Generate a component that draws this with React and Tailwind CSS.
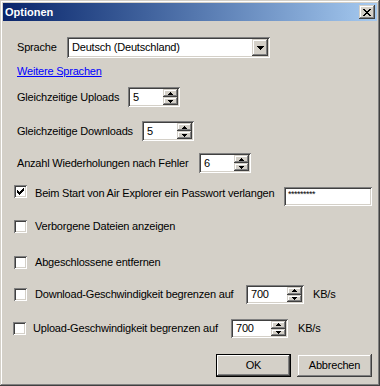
import React from "react";

const SUNKEN =
  "shadow-[inset_1px_1px_#808080,inset_-1px_-1px_#ffffff,inset_2px_2px_#404040,inset_-2px_-2px_#d4d0c8]";
const RAISED =
  "shadow-[inset_-1px_-1px_#404040,inset_1px_1px_#ffffff,inset_-2px_-2px_#808080,inset_2px_2px_#d4d0c8]";
const RAISED_SOFT =
  "shadow-[inset_-1px_-1px_#404040,inset_1px_1px_#d4d0c8,inset_-2px_-2px_#808080,inset_2px_2px_#ffffff]";

function CloseX() {
  const rows = ["11000011", "01100110", "00111100", "00011000", "00111100", "01100110", "11000011"];
  return (
    <svg width="8" height="7" viewBox="0 0 8 7" shapeRendering="crispEdges">
      {rows.map((r, y) =>
        r.split("").map((c, x) => (c === "1" ? <rect key={x + "-" + y} x={x} y={y} width="1" height="1" fill="#000" /> : null))
      )}
    </svg>
  );
}

function Tick() {
  const cols = [2, 3, 4, 3, 2, 1, 0];
  return (
    <svg width="7" height="7" viewBox="0 0 7 7" shapeRendering="crispEdges">
      {cols.map((y, x) => (
        <rect key={x} x={x} y={y} width="1" height="3" fill="#000" />
      ))}
    </svg>
  );
}

function Check({ checked }) {
  return (
    <div className={`flex h-[13px] w-[13px] shrink-0 items-center justify-center bg-white ${SUNKEN}`}>
      {checked ? <Tick /> : null}
    </div>
  );
}

function Arrow({ up, w = 5 }) {
  const h = Math.ceil(w / 2);
  const pts = up ? `0,${h} ${w},${h} ${w / 2},0` : `0,0 ${w},0 ${w / 2},${h}`;
  return (
    <svg width={w} height={h} viewBox={`0 0 ${w} ${h}`} shapeRendering="crispEdges">
      <polygon points={pts} fill="#000" />
    </svg>
  );
}

function Spin({ value, w = "w-[52px]", h = "h-[20px]" }) {
  return (
    <div className={`flex ${w} ${h} shrink-0 bg-white p-[2px] ${SUNKEN}`}>
      <div className="flex flex-1 items-center pl-[3px]">{value}</div>
      <div className="flex w-[15px] flex-col">
        <div className={`flex flex-1 items-center justify-center bg-[#d4d0c8] ${RAISED_SOFT}`}>
          <Arrow up />
        </div>
        <div className={`flex flex-1 items-center justify-center bg-[#d4d0c8] ${RAISED_SOFT}`}>
          <Arrow />
        </div>
      </div>
    </div>
  );
}

function Button({ children, def }) {
  if (def) {
    return (
      <div className="h-[23px] w-[75px] border border-black">
        <div className={`flex h-full w-full items-center justify-center bg-[#d4d0c8] ${RAISED}`}>{children}</div>
      </div>
    );
  }
  return (
    <div className={`flex h-[23px] w-[75px] items-center justify-center bg-[#d4d0c8] ${RAISED_SOFT}`}>{children}</div>
  );
}

export default function App() {
  return (
    <div
      className={`flex h-[386px] w-[380px] flex-col bg-[#d4d0c8] p-[3px] font-['Liberation_Sans',Arial,sans-serif] text-[11px] leading-[13px] tracking-[-0.2px] whitespace-nowrap text-black ${RAISED_SOFT}`}
    >
      {/* Title bar */}
      <div className="flex h-[18px] shrink-0 items-center bg-gradient-to-r from-[#0a246a] to-[#a6caf0] pl-[2px] pr-[2px]">
        <span className="flex-1 text-[11px] font-bold tracking-normal text-white">Optionen</span>
        <div className={`flex h-[14px] w-[16px] items-center justify-center bg-[#d4d0c8] ${RAISED_SOFT}`}>
          <CloseX />
        </div>
      </div>

      <div className="flex flex-1 flex-col pl-[11px] pr-[5px] pb-[6px]">
        {/* Sprache */}
        <div className="mt-[16px] flex items-center pl-[3px]">
          <span className="w-[50px]">Sprache</span>
          <div className={`flex h-[21px] w-[203px] bg-white p-[2px] ${SUNKEN}`}>
            <div className="flex flex-1 items-center pl-[3px]">Deutsch (Deutschland)</div>
            <div className={`flex w-[16px] items-center justify-center bg-[#d4d0c8] ${RAISED_SOFT}`}>
              <Arrow w={7} />
            </div>
          </div>
        </div>

        {/* Link */}
        <div className="mt-[7px] pl-[3px]">
          <span className="text-[#0000ff] underline">Weitere Sprachen</span>
        </div>

        {/* Uploads */}
        <div className="mt-[9px] flex items-center pl-[3px]">
          <span className="w-[111px]">Gleichzeitige Uploads</span>
          <Spin value="5" />
        </div>

        {/* Downloads */}
        <div className="mt-[14px] flex items-center pl-[3px]">
          <span className="w-[125px]">Gleichzeitige Downloads</span>
          <Spin value="5" />
        </div>

        {/* Anzahl */}
        <div className="mt-[12px] flex items-center pl-[3px]">
          <span className="w-[182px]">Anzahl Wiederholungen nach Fehler</span>
          <Spin value="6" />
        </div>

        {/* Passwort */}
        <div className="mt-[12px] flex items-start">
          <Check checked />
          <span className="ml-[8px] mt-[2px] w-[249px]">Beim Start von Air Explorer ein Passwort verlangen</span>
          <div className={`mt-[2px] flex h-[19px] w-[88px] items-start bg-white p-[2px] pl-[4px] ${SUNKEN}`}>
            <span className="text-[9px] leading-[10px] tracking-[-0.5px]">*********</span>
          </div>
        </div>

        {/* Verborgene */}
        <div className="mt-[14px] flex items-center">
          <Check />
          <span className="ml-[8px]">Verborgene Dateien anzeigen</span>
        </div>

        {/* Abgeschlossene */}
        <div className="mt-[23px] flex items-center">
          <Check />
          <span className="ml-[8px]">Abgeschlossene entfernen</span>
        </div>

        {/* Download limit */}
        <div className="mt-[16px] flex items-center">
          <Check />
          <span className="ml-[8px] w-[211px]">Download-Geschwindigkeit begrenzen auf</span>
          <Spin value="700" w="w-[58px]" h="h-[19px]" />
          <span className="ml-[9px]">KB/s</span>
        </div>

        {/* Upload limit */}
        <div className="mt-[15px] flex items-center">
          <div className="-ml-[1px]">
            <Check />
          </div>
          <span className="ml-[7px] w-[198px]">Upload-Geschwindigkeit begrenzen auf</span>
          <Spin value="700" w="w-[57px]" h="h-[19px]" />
          <span className="ml-[10px]">KB/s</span>
        </div>

        {/* Buttons */}
        <div className="mt-auto flex justify-end gap-[6px]">
          <Button def>OK</Button>
          <Button>Abbrechen</Button>
        </div>
      </div>
    </div>
  );
}
